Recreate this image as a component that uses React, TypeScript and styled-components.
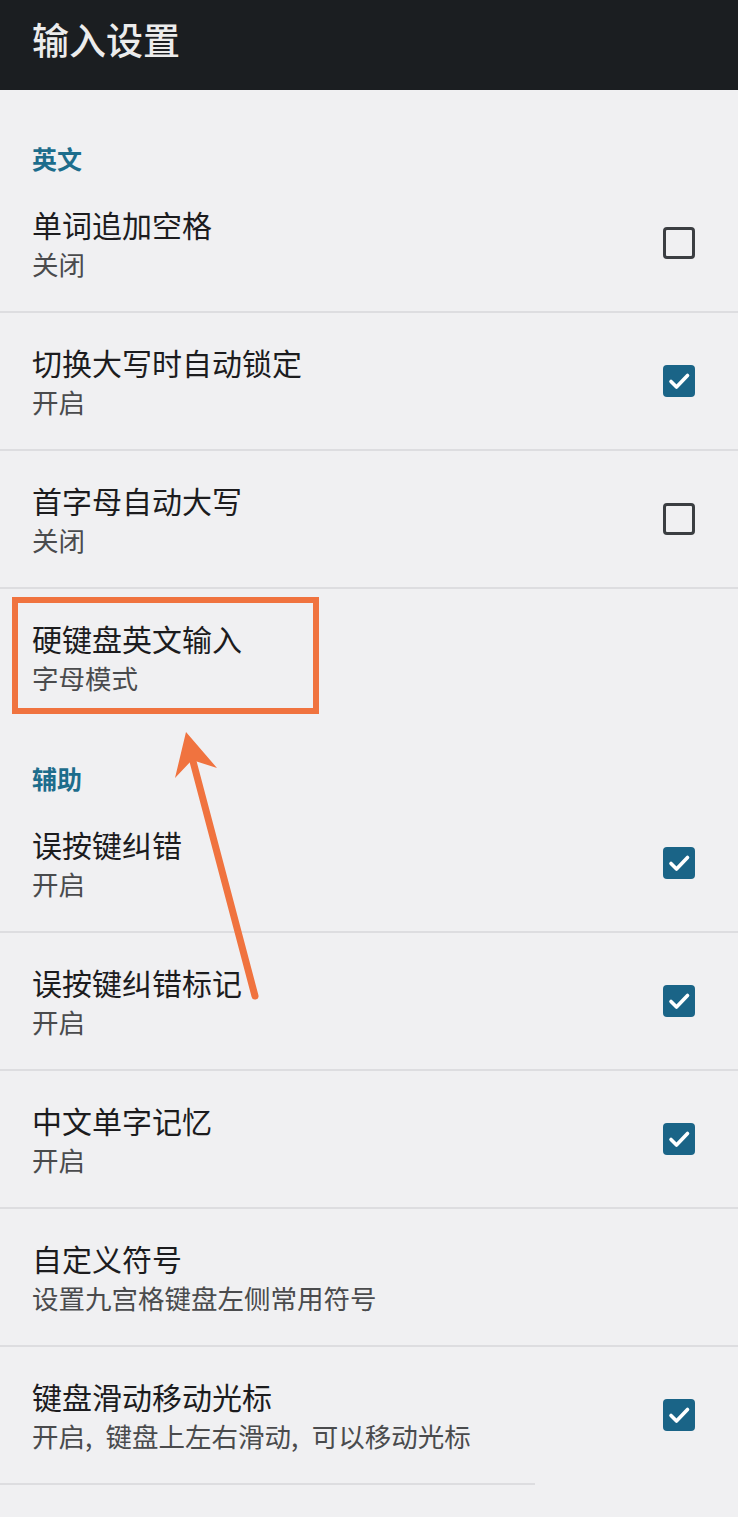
import React from "react";
import styled, { createGlobalStyle } from "styled-components";

interface Item {
  title: string;
  summary: string;
  checked?: boolean;
  highlight?: boolean;
  divider?: "full" | "short" | "none";
}

interface Section {
  name: string;
  items: Item[];
}

const sections: Section[] = [
  {
    name: "英文",
    items: [
      { title: "单词追加空格", summary: "关闭", checked: false },
      { title: "切换大写时自动锁定", summary: "开启", checked: true },
      { title: "首字母自动大写", summary: "关闭", checked: false },
      { title: "硬键盘英文输入", summary: "字母模式", highlight: true, divider: "none" },
    ],
  },
  {
    name: "辅助",
    items: [
      { title: "误按键纠错", summary: "开启", checked: true },
      { title: "误按键纠错标记", summary: "开启", checked: true },
      { title: "中文单字记忆", summary: "开启", checked: true },
      { title: "自定义符号", summary: "设置九宫格键盘左侧常用符号" },
      {
        title: "键盘滑动移动光标",
        summary: "开启,\u2002键盘上左右滑动,\u2002可以移动光标",
        checked: true,
        divider: "short",
      },
    ],
  },
];

export default function App() {
  return (
    <>
      <GlobalStyle />
      <Page>
        <TopBar>
          <TopTitle>输入设置</TopTitle>
        </TopBar>
        <List>
          {sections.map((section, si) => (
            <div key={section.name}>
              <SectionTitle $first={si === 0}>{section.name}</SectionTitle>
              {section.items.map((item) => (
                <Row key={item.title} $divider={item.divider ?? "full"}>
                  <RowText>
                    <RowTitle>{item.title}</RowTitle>
                    <RowSummary>{item.summary}</RowSummary>
                  </RowText>
                  {item.checked !== undefined && <CheckBox checked={item.checked} />}
                  {item.highlight && <HighlightFrame />}
                </Row>
              ))}
            </div>
          ))}
          <Arrow width="120" height="300" viewBox="0 0 120 300">
            <line x1="105" y1="276" x2="40" y2="30" stroke="#f0733f" strokeWidth="7" strokeLinecap="round" />
            <polygon points="36,12 25,58 42,40 67,48" fill="#f0733f" />
          </Arrow>
        </List>
      </Page>
    </>
  );
}

function CheckBox({ checked }: { checked: boolean }) {
  return (
    <Box $checked={checked}>
      {checked && (
        <svg width="32" height="32" viewBox="0 0 32 32">
          <path
            d="M8 16.5 L13.5 22 L24.5 10.5"
            fill="none"
            stroke="#ffffff"
            strokeWidth="3.6"
            strokeLinecap="round"
            strokeLinejoin="round"
          />
        </svg>
      )}
    </Box>
  );
}

const GlobalStyle = createGlobalStyle`
  html, body {
    margin: 0;
    padding: 0;
    background: #f0f0f2;
  }
  body {
    font-family: "Noto Sans CJK SC", "Noto Sans", sans-serif;
  }
`;

const Page = styled.div`
  width: 738px;
  min-height: 1517px;
  background: #f0f0f2;
`;

const TopBar = styled.div`
  height: 90px;
  background: #1b1e21;
  display: flex;
  align-items: center;
  padding: 0 32px;
  box-sizing: border-box;
`;

const TopTitle = styled.div`
  color: #ececec;
  font-size: 37px;
  font-weight: 500;
  line-height: 1;
  margin-top: -12px;
`;

const List = styled.div`
  position: relative;
`;

const SectionTitle = styled.div<{ $first: boolean }>`
  padding: ${(p) => (p.$first ? "51px" : "34px")} 32px 0;
  height: 34px;
  color: #1d6d8c;
  font-size: 25px;
  font-weight: 700;
  line-height: 34px;
`;

const Row = styled.div<{ $divider: "full" | "short" | "none" }>`
  position: relative;
  height: 136px;
  display: flex;
  align-items: center;
  padding: 0 43px 0 32px;
  box-sizing: content-box;
  border-bottom: 2px solid ${(p) => (p.$divider === "full" ? "#dddde0" : "transparent")};

  ${(p) =>
    p.$divider === "short" &&
    `
    &::after {
      content: "";
      position: absolute;
      left: 0;
      bottom: -2px;
      width: 535px;
      height: 2px;
      background: #dddde0;
    }
  `}
`;

const RowText = styled.div`
  flex: 1;
  display: flex;
  flex-direction: column;
  gap: 3px;
`;

const RowTitle = styled.div`
  color: #1c1c1e;
  font-size: 30px;
  line-height: 39px;
`;

const RowSummary = styled.div`
  color: #4a4b4d;
  font-size: 26.5px;
  line-height: 34px;
`;

const Box = styled.div<{ $checked: boolean }>`
  width: 32px;
  height: 32px;
  box-sizing: border-box;
  border-radius: 4px;
  background: ${(p) => (p.$checked ? "#1a6487" : "transparent")};
  border: ${(p) => (p.$checked ? "none" : "3.5px solid #3b3e42")};
  display: flex;
  align-items: center;
  justify-content: center;
`;

const HighlightFrame = styled.div`
  position: absolute;
  left: 12px;
  top: 8px;
  width: 307px;
  height: 117px;
  box-sizing: border-box;
  border: 6px solid #f0733f;
`;

const Arrow = styled.svg`
  position: absolute;
  left: 150px;
  top: 630px;
  overflow: visible;
`;
